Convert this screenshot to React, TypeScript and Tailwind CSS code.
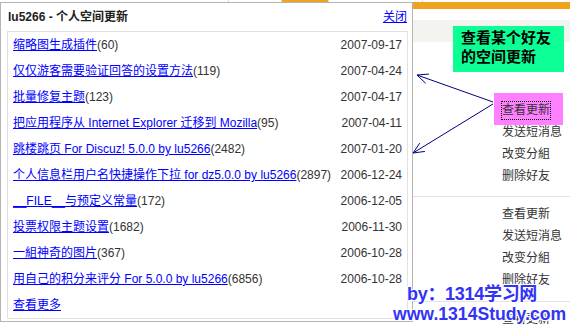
import React from "react";

type Row = { title: string; count?: string; date?: string };

const rows: Row[] = [
  { title: "缩略图生成插件", count: "(60)", date: "2007-09-17" },
  { title: "仅仅游客需要验证回答的设置方法", count: "(119)", date: "2007-04-24" },
  { title: "批量修复主题", count: "(123)", date: "2007-04-17" },
  { title: "把应用程序从 Internet Explorer 迁移到 Mozilla", count: "(95)", date: "2007-04-11" },
  { title: "跳楼跳页 For Discuz! 5.0.0 by lu5266", count: "(2482)", date: "2007-01-20" },
  { title: "个人信息栏用户名快捷操作下拉 for dz5.0.0 by lu5266", count: "(2897)", date: "2006-12-24" },
  { title: "__FILE__与预定义常量", count: "(172)", date: "2006-12-05" },
  { title: "投票权限主题设置", count: "(1682)", date: "2006-11-30" },
  { title: "一組神奇的图片", count: "(367)", date: "2006-10-28" },
  { title: "用自己的积分来评分 For 5.0.0 by lu5266", count: "(6856)", date: "2006-10-28" },
  { title: "查看更多" },
];

const menu = ["查看更新", "发送短消息", "改变分組", "删除好友"];

function head(tx: number, ty: number, fx: number, fy: number, len = 12, deg = 24) {
  const a = Math.atan2(fy - ty, fx - tx);
  const r = (deg * Math.PI) / 180;
  const p1 = [tx + len * Math.cos(a + r), ty + len * Math.sin(a + r)];
  const p2 = [tx + len * Math.cos(a - r), ty + len * Math.sin(a - r)];
  return `M${p1[0]},${p1[1]} L${tx},${ty} L${p2[0]},${p2[1]}`;
}

export default function App() {
  return (
    <div className="relative w-[570px] h-[327px] overflow-hidden bg-white font-['Liberation_Sans','Noto_Sans_CJK_SC',sans-serif] text-[12px] text-[#333]">
      {/* background page */}
      <div className="flex flex-col w-full h-full">
        <div className="flex h-[2px] shrink-0">
          <div className="w-[229px] border-r border-[#ddd]" />
          <div className="w-[53px] border-r border-[#ddd]" />
          <div className="w-[46px] bg-[#f0a41e]" />
          <div className="w-[95px] border-l border-r border-[#ddd]" />
          <div className="flex-1" />
        </div>
        <div className="h-[7px] shrink-0 bg-[#f0a41e]" />
        <div className="flex flex-1 min-h-0">
          <div className="w-[412px] shrink-0" />
          <div className="flex-1 flex flex-col">
            <div className="h-[11px] shrink-0" />
            <div className="h-[22px] shrink-0 bg-[#f3f3ef]" />
            <div className="h-[56.5px] shrink-0" />
            {[0, 1, 2].map((g) => (
              <div key={g} className={`shrink-0 ${g < 2 ? "border-b border-[#e3e3e3] pb-[9.5px]" : ""} ${g === 0 ? "pt-0" : "pt-[6px]"}`}>
                {(g === 2 ? menu.slice(0, 1) : menu).map((m, i) =>
                  g === 0 && i === 0 ? (
                    <div key={m} className="relative h-[22px] leading-[22px] pl-[90px]">
                      <div className="absolute left-[82px] top-[-5.5px] w-[69px] h-[32px] bg-[#ff80ff]" />
                      <span className="relative border border-dotted border-black leading-[17px] inline-block ml-[-1px] text-[#333]">
                        {m}
                      </span>
                    </div>
                  ) : (
                    <div key={m} className="relative h-[22px] leading-[22px] pl-[90px] text-[#333]">
                      {m}
                    </div>
                  )
                )}
              </div>
            ))}
          </div>
        </div>
      </div>

      {/* green annotation */}
      <div className="absolute left-[453px] top-[26px] w-[111px] h-[46px] bg-[#0cff94] pl-[8px] pt-[1px] text-black font-bold text-[15px] leading-[19px] font-['Noto_Sans_CJK_SC',sans-serif]">
        查看某个好友
        <br />
        的空间更新
      </div>

      {/* popup */}
      <div className="absolute left-0 top-[2px] w-[413px] h-[320px] bg-white border border-[#b4b4b4] flex flex-col">
        <div className="h-[28px] flex items-center justify-between pl-[7px] pr-[5px]">
          <span className="font-bold text-[#222]">lu5266 - 个人空间更新</span>
          <a className="text-[#0000ff] underline cursor-pointer">关闭</a>
        </div>
        <div className="ml-[6px] mr-[4px] border border-[#e2e2e2] flex flex-col">
          {rows.map((r, i) => (
            <div key={i} className="h-[26px] flex items-center justify-between pl-[5px] pr-[5px]">
              <span className="whitespace-nowrap">
                <a className="text-[#0000ff] underline cursor-pointer">{r.title}</a>
                {r.count && <span className="text-[#333]">{r.count}</span>}
              </span>
              {r.date && <span className="text-[#333]">{r.date}</span>}
            </div>
          ))}
        </div>
      </div>

      {/* arrows */}
      <svg className="absolute inset-0 pointer-events-none" width={570} height={327}>
        <g stroke="#000080" strokeWidth={1} fill="none">
          <line x1={493} y1={102} x2={417} y2={75} />
          <path d={head(417, 75, 493, 102)} />
          <line x1={493} y1={104} x2={413} y2={153} />
          <path d={head(413, 153, 493, 104)} />
        </g>
      </svg>

      {/* watermark */}
      <div className="absolute left-[393px] top-[285px] font-bold text-[#3333f5] font-['Liberation_Sans','Noto_Sans_CJK_SC',sans-serif] [text-shadow:1px_1px_0_#fff,-1px_-1px_0_#fff,1px_-1px_0_#fff,-1px_1px_0_#fff] whitespace-nowrap">
        <div className="pl-[14px] text-[18px] leading-[19px] tracking-[-0.3px]">by：1314学习网</div>
        <div className="text-[17.6px] leading-[21px]">www.1314Study.com</div>
      </div>
    </div>
  );
}
